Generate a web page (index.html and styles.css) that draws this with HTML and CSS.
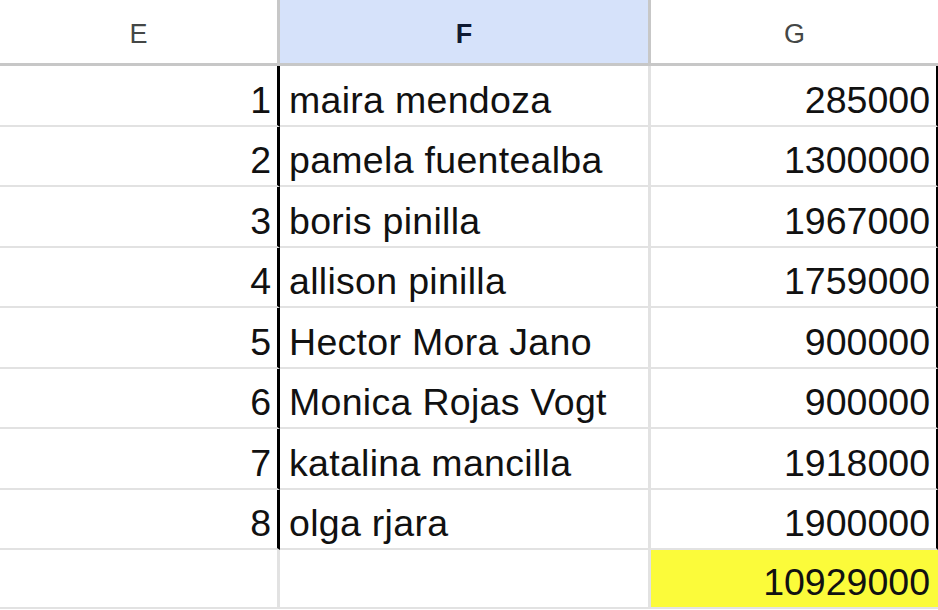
FILE: index.html
```html
<!DOCTYPE html>
<html lang="es">
<head>
<meta charset="utf-8">
<title>Hoja</title>
<link rel="stylesheet" href="styles.css">
</head>
<body>
<div class="sheet">
  <div class="hdr col-e">E</div>
  <div class="hdr col-f sel">F</div>
  <div class="hdr col-g">G</div>

  <div class="cell num col-e mark">1</div><div class="cell txt col-f">maira mendoza</div><div class="cell num col-g mark">285000</div>
  <div class="cell num col-e mark">2</div><div class="cell txt col-f">pamela fuentealba</div><div class="cell num col-g mark">1300000</div>
  <div class="cell num col-e mark">3</div><div class="cell txt col-f">boris pinilla</div><div class="cell num col-g mark">1967000</div>
  <div class="cell num col-e mark">4</div><div class="cell txt col-f">allison pinilla</div><div class="cell num col-g mark">1759000</div>
  <div class="cell num col-e mark">5</div><div class="cell txt col-f">Hector Mora Jano</div><div class="cell num col-g mark">900000</div>
  <div class="cell num col-e mark">6</div><div class="cell txt col-f">Monica Rojas Vogt</div><div class="cell num col-g mark">900000</div>
  <div class="cell num col-e mark">7</div><div class="cell txt col-f">katalina mancilla</div><div class="cell num col-g mark">1918000</div>
  <div class="cell num col-e mark">8</div><div class="cell txt col-f">olga rjara</div><div class="cell num col-g mark">1900000</div>

  <div class="cell last col-e"></div><div class="cell last txt col-f"></div><div class="cell last num col-g total">10929000</div>
</div>
</body>
</html>
```

FILE: styles.css
```css
html, body {
  margin: 0;
  padding: 0;
  background: #ffffff;
}

.sheet {
  display: grid;
  grid-template-columns: 280px 371px 287px;
  grid-template-rows: 66px repeat(8, 60.5px) 59px;
  width: 938px;
  font-family: "Liberation Sans", Arial, sans-serif;
  color: #111111;
}

.hdr {
  box-sizing: border-box;
  display: flex;
  align-items: center;
  justify-content: center;
  padding-top: 6px;
  font-size: 27px;
  color: #444746;
  border-bottom: 3px solid #c7c7c7;
  background: #ffffff;
}

.hdr.col-e,
.hdr.col-f {
  border-right: 3px solid #c7c7c7;
}

.hdr.sel {
  background: #d6e2fa;
  color: #0f1a33;
  font-weight: bold;
}

.cell {
  box-sizing: border-box;
  display: flex;
  align-items: flex-end;
  padding-bottom: 4px;
  font-size: 37.5px;
  line-height: 42px;
  border-bottom: 2px solid #e2e2e2;
  white-space: nowrap;
  overflow: hidden;
}

.cell.col-e,
.cell.col-f {
  border-right: 3px solid #e2e2e2;
}

.cell.col-e.mark {
  border-right-color: #000000;
}

.cell.col-g.mark {
  border-right: 2px solid #000000;
}

.num {
  justify-content: flex-end;
  padding-right: 6px;
}

.txt {
  justify-content: flex-start;
  padding-left: 9px;
  letter-spacing: 0.3px;
}

.total {
  background: #fbfb3a;
  padding-right: 8px;
}
```
